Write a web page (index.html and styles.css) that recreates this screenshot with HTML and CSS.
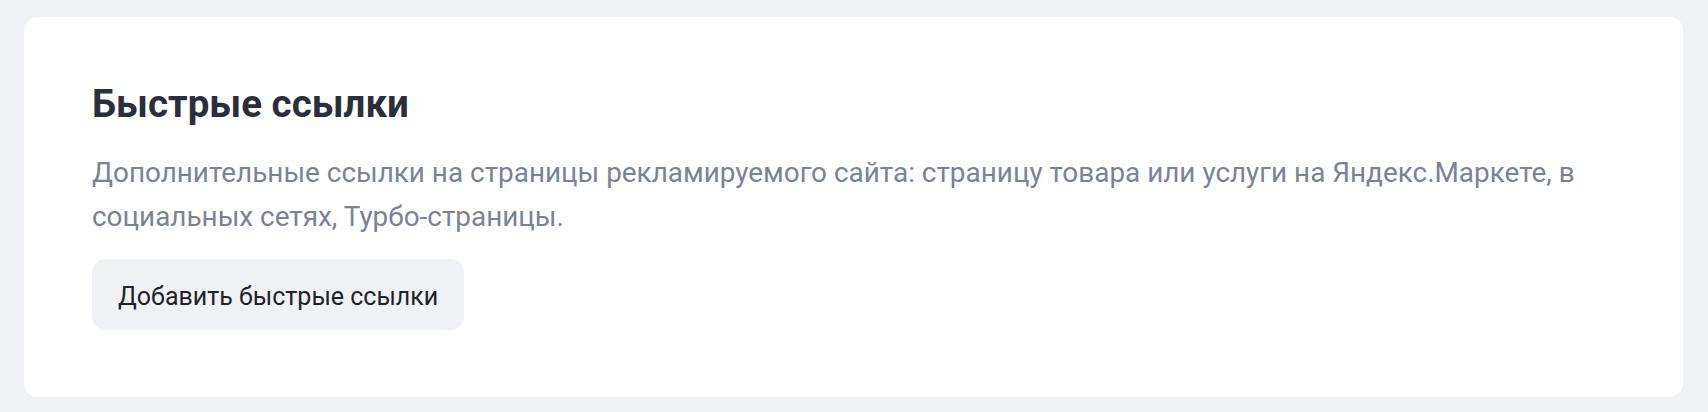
FILE: index.html
```html
<!DOCTYPE html>
<html lang="ru">
<head>
<meta charset="utf-8">
<link rel="stylesheet" href="styles.css">
</head>
<body>
<section class="card">
  <h2 class="card__title">Быстрые ссылки</h2>
  <p class="card__text">Дополнительные ссылки на страницы рекламируемого сайта: страницу товара или услуги на Яндекс.Маркете, в социальных сетях, Турбо-страницы.</p>
  <button class="card__button" type="button">Добавить быстрые ссылки</button>
</section>
</body>
</html>
```
FILE: styles.css
```css
html, body {
  margin: 0;
  padding: 0;
}
body {
  background: #f0f1f5;
  font-family: Roboto, "Noto Sans", sans-serif;
  padding: 17px 25px 15px 24px;
}
.card {
  background: #ffffff;
  border-radius: 14px;
  padding: 63px 68px 66px;
  height: 380px;
  box-sizing: border-box;
  display: flex;
  flex-direction: column;
  align-items: flex-start;
}
.card__title {
  margin: 0;
  font-size: 38.5px;
  line-height: 48px;
  font-weight: 700;
  color: #2b2f3b;
}
.card__text {
  margin: 23px 0 0;
  font-size: 27.9px;
  line-height: 44px;
  color: #7b8296;
  max-width: 1500px;
}
.card__button {
  margin-top: 20px;
  border: 0;
  background: #f0f1f5;
  border-radius: 14px;
  height: 71px;
  padding: 3px 26px 0;
  font-family: inherit;
  font-size: 25px;
  color: #1f2229;
}
```
